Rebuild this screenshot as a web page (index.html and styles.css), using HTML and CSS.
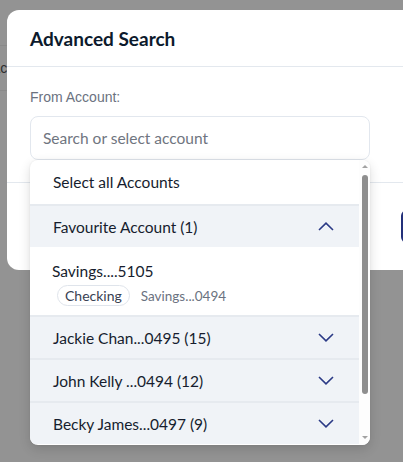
FILE: index.html
```html
<!DOCTYPE html>
<html lang="en">
<head>
<meta charset="utf-8">
<title>Advanced Search</title>
<link rel="stylesheet" href="styles.css">
</head>
<body>
<div class="page">
  <div class="page-row"><span class="page-cell">Acc</span></div>
</div>

<div class="modal">
  <div class="modal-header"><h2 class="modal-title">Advanced Search</h2></div>
  <div class="modal-body">
    <div class="field-label">From Account:</div>
    <div class="combo">
      <div class="combo-input">Search or select account</div>
      <div class="menu">
        <div class="menu-list">
          <div class="opt-all">Select all Accounts</div>
          <div class="grp">
            <span>Favourite Account (1)</span>
            <svg class="chev" width="16" height="9" viewBox="0 0 16 9"><path d="M1 8 L8 1.2 L15 8" fill="none" stroke="#2b3a86" stroke-width="1.6"/></svg>
          </div>
          <div class="acct">
            <div class="acct-name">Savings....5105</div>
            <div class="acct-meta"><span class="chip">Checking</span><span class="acct-sub">Savings...0494</span></div>
          </div>
          <div class="grp">
            <span>Jackie Chan...0495 (15)</span>
            <svg class="chev" width="16" height="9" viewBox="0 0 16 9"><path d="M1 1 L8 7.8 L15 1" fill="none" stroke="#2b3a86" stroke-width="1.6"/></svg>
          </div>
          <div class="grp">
            <span>John Kelly ...0494 (12)</span>
            <svg class="chev" width="16" height="9" viewBox="0 0 16 9"><path d="M1 1 L8 7.8 L15 1" fill="none" stroke="#2b3a86" stroke-width="1.6"/></svg>
          </div>
          <div class="grp">
            <span>Becky James...0497 (9)</span>
            <svg class="chev" width="16" height="9" viewBox="0 0 16 9"><path d="M1 1 L8 7.8 L15 1" fill="none" stroke="#2b3a86" stroke-width="1.6"/></svg>
          </div>
        </div>
        <div class="scrollbar">
          <span class="sb-up"></span>
          <span class="sb-thumb"></span>
          <span class="sb-down"></span>
        </div>
      </div>
    </div>
  </div>
  <div class="modal-footer"><button class="btn-primary" aria-label="Search"></button></div>
</div>
</body>
</html>
```

FILE: styles.css
```css
* { box-sizing: border-box; }

html, body {
  margin: 0;
  padding: 0;
  width: 403px;
  height: 462px;
  overflow: hidden;
}

body {
  background: #939393;
  font-family: Lato, "Liberation Sans", sans-serif;
  position: relative;
}

.page {
  padding-top: 45px;
}

.page-row {
  height: 46px;
  border-top: 1px solid #8a8a8a;
  border-bottom: 1px solid #8a8a8a;
  display: flex;
  align-items: center;
  font-family: "Liberation Sans", sans-serif;
  font-size: 14px;
  color: #2d2d2d;
  white-space: nowrap;
}

.page-cell {
  margin-left: -9px;
}

.modal {
  position: absolute;
  left: 7px;
  top: 10px;
  width: 500px;
  background: #fff;
  border-radius: 12px;
}

.modal-header {
  height: 57px;
  padding-left: 23px;
  display: flex;
  align-items: center;
  border-bottom: 1px solid #e3e8ee;
}

.modal-title {
  margin: 0;
  font-size: 19px;
  font-weight: 700;
  color: #0c1a2c;
}

.modal-body {
  padding: 22px 23px 22px;
}

.field-label {
  font-family: "Liberation Sans", Arial, sans-serif;
  font-size: 14px;
  line-height: 16px;
  color: #6b7280;
  margin-bottom: 11px;
}

.combo {
  position: relative;
  width: 340px;
}

.combo-input {
  height: 44px;
  border: 1px solid #e2e7ee;
  border-radius: 8px;
  padding: 0 12px;
  display: flex;
  align-items: center;
  font-size: 15.5px;
  color: #6f7580;
}

.menu {
  position: absolute;
  left: 0;
  top: 44px;
  width: 340px;
  height: 285px;
  background: #fff;
  border-radius: 8px;
  box-shadow: 0 4px 12px rgba(0, 0, 0, 0.14), 0 0 2px rgba(0, 0, 0, 0.08);
  display: flex;
  overflow: hidden;
  z-index: 2;
}

.menu-list {
  flex: 1;
  overflow: hidden;
  color: #161d2e;
  font-size: 15.5px;
}

.opt-all {
  height: 44px;
  padding-left: 23px;
  display: flex;
  align-items: center;
}

.grp {
  height: 43px;
  border-top: 2px solid #e6eaef;
  background: #f0f3f7;
  padding: 0 25px 0 23px;
  display: flex;
  align-items: center;
  justify-content: space-between;
}

.chev {
  display: block;
}

.acct {
  height: 68px;
  padding: 13px 0 0 22px;
}

.acct-name {
  line-height: 22px;
}

.acct-meta {
  display: flex;
  align-items: center;
  gap: 11px;
  margin-top: 3px;
  padding-left: 5px;
}

.chip {
  height: 21px;
  border: 1px solid #dfe4eb;
  border-radius: 11px;
  padding: 0 7px;
  display: flex;
  align-items: center;
  font-size: 14px;
  color: #384152;
}

.acct-sub {
  font-size: 13.5px;
  color: #6b7280;
}

.scrollbar {
  width: 11px;
  background: #fdfdfd;
  display: flex;
  flex-direction: column;
  align-items: center;
  padding: 5px 0 6px;
}

.sb-up {
  width: 0;
  height: 0;
  border-left: 3px solid transparent;
  border-right: 3px solid transparent;
  border-bottom: 3px solid #a2a2a2;
}

.sb-thumb {
  width: 6px;
  height: 219px;
  margin-top: 7px;
  border-radius: 3px;
  background: #8e8e8e;
}

.sb-down {
  margin-top: auto;
  width: 0;
  height: 0;
  border-left: 3px solid transparent;
  border-right: 3px solid transparent;
  border-top: 3px solid #a2a2a2;
}

.modal-footer {
  border-top: 1px solid #e3e8ee;
  height: 88px;
  padding: 27px 24px 0;
  display: flex;
  justify-content: flex-end;
  align-items: flex-start;
}

.btn-primary {
  width: 82px;
  height: 33px;
  border: 2px solid #23307a;
  border-radius: 6px;
  background: #2b3a8c;
}
```
